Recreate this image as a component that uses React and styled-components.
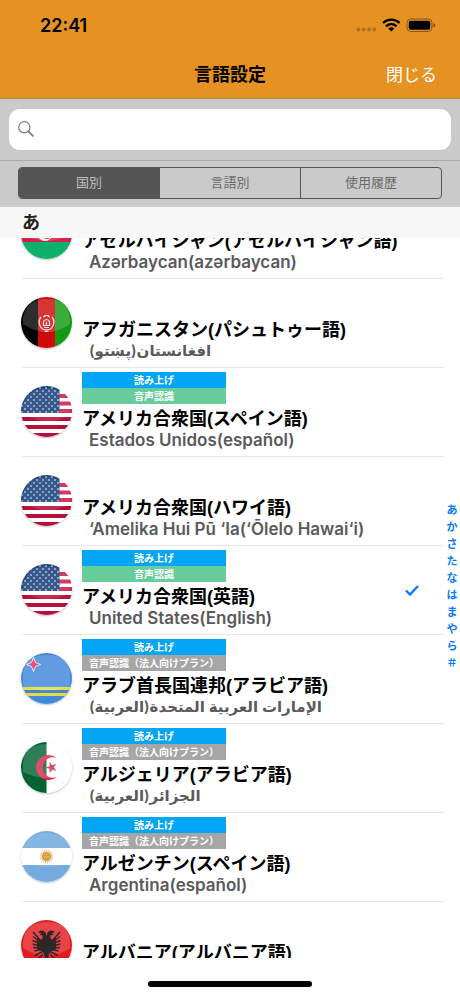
import React, { useLayoutEffect, useRef, useState } from 'react';
import styled, { createGlobalStyle } from 'styled-components';

const GlobalStyle = createGlobalStyle`
  * {
    box-sizing: border-box;
  }
  body {
    margin: 0;
    background: #fff;
    color: #000;
    font-family: Inter, 'Noto Sans CJK JP', 'DejaVu Sans', sans-serif;
  }
  button, input {
    font: inherit;
    color: inherit;
  }
`;

const Screen = styled.div`
  display: flex;
  flex-direction: column;
  height: 100vh;
  overflow: hidden;
`;

const Header = styled.header`
  background: #e69223;
  border-bottom: 1px solid #b08a55;
`;

const StatusBar = styled.div`
  display: flex;
  align-items: center;
  justify-content: space-between;
  height: 50px;
  padding: 0 24px 0 40px;
`;

const Time = styled.span`
  font-size: 18px;
  font-weight: 600;
`;

const StatusIcons = styled.svg`
  width: 80px;
  height: 16px;
`;

const NavBar = styled.div`
  display: grid;
  grid-template-columns: 1fr auto 1fr;
  align-items: center;
  height: 48px;
  padding: 0 23px 2px;
`;

const Title = styled.h1`
  grid-column: 2;
  margin: 0;
  font-size: 18px;
  font-weight: 700;
`;

const CloseButton = styled.button`
  justify-self: end;
  padding: 0;
  border: 0;
  background: none;
  color: #fff;
  font-size: 17px;
  font-weight: 400;
`;

const SearchBar = styled.div`
  padding: 10px 9px;
  background: #cacaca;
  border-bottom: 1px solid #ababab;
`;

const SearchField = styled.label`
  display: flex;
  align-items: center;
  gap: 8px;
  height: 41px;
  padding: 0 9px 2px;
  border-radius: 11px;
  background: #fff;
  svg {
    width: 16px;
    height: 16px;
    flex: none;
  }
`;

const SearchInput = styled.input`
  flex: 1;
  min-width: 0;
  border: 0;
  outline: 0;
  background: none;
  font-size: 16px;
`;

const SegmentBar = styled.div`
  padding: 6px 18px 8px;
  background: #cacaca;
`;

const Segments = styled.div`
  display: flex;
  height: 32px;
  border: 1px solid #555;
  border-radius: 4px;
  overflow: hidden;
`;

const Segment = styled.button`
  flex: 1;
  padding: 0 0 3px;
  border: 0;
  background: ${({ $active }) => ($active ? '#555' : 'transparent')};
  color: ${({ $active }) => ($active ? '#bdbdbd' : '#6a6a6a')};
  font-size: 13px;
  & + & {
    border-left: 1px solid #555;
  }
`;

const SectionHeader = styled.h2`
  height: 31px;
  margin: 0;
  padding: 0 22px;
  background: #f7f7f7;
  color: #222;
  font-size: 18px;
  font-weight: 700;
  line-height: 31px;
`;

const Body = styled.main`
  display: flex;
  flex: 1;
  min-height: 0;
`;

const List = styled.ul`
  flex: 1;
  min-width: 0;
  margin: 0;
  padding: 0;
  overflow-y: auto;
  scrollbar-width: none;
  list-style: none;
`;

const Item = styled.li`
  margin-left: 22px;
  border-bottom: 1px solid #e8e8e8;
`;

const Row = styled.button`
  display: flex;
  align-items: center;
  width: 100%;
  height: 88px;
  padding: 0 24px 0 0;
  border: 0;
  background: none;
  text-align: left;
`;

const FlagIcon = styled.svg`
  flex: none;
  width: 51px;
  height: 51px;
  margin: 0 0 2px -1px;
  border-radius: 50%;
  box-shadow: 0 1px 2px rgba(0, 0, 0, 0.25);
`;

const Info = styled.span`
  flex: 1;
  min-width: 0;
  height: 88px;
  padding: 4px 0 0 10px;
  white-space: nowrap;
`;

const Badges = styled.span`
  display: block;
  width: 144px;
  height: 32px;
`;

const badgeColors = { blue: '#03a5f5', green: '#69cc9b', gray: '#a6a6a6' };

const Badge = styled.span`
  display: block;
  height: 16px;
  background: ${({ $tone }) => badgeColors[$tone]};
  color: #fff;
  font-size: 10px;
  font-weight: 700;
  line-height: 16px;
  text-align: center;
`;

const Name = styled.span`
  display: block;
  height: 26px;
  font-family: 'Liberation Sans', 'Noto Sans CJK JP', sans-serif;
  font-size: 18px;
  font-weight: 700;
  line-height: 30px;
`;

const NativeName = styled.span`
  display: block;
  height: 22px;
  padding-left: 7px;
  color: #5a5a5a;
  font-size: 17px;
  font-weight: 600;
  line-height: 20px;
  text-align: left;
  &:dir(rtl) {
    font-size: 15px;
  }
`;

const CheckMark = styled.svg`
  flex: none;
  width: 16px;
  height: 14px;
`;

const IndexBar = styled.nav`
  display: flex;
  flex-direction: column;
  justify-content: center;
  width: 16px;
  padding-bottom: 24px;
`;

const IndexLink = styled.a`
  height: 17px;
  color: #0a7aff;
  font-family: 'Noto Sans CJK JP', sans-serif;
  font-size: 11px;
  font-weight: 700;
  line-height: 17px;
  text-align: center;
  text-decoration: none;
`;

const HomeArea = styled.footer`
  display: flex;
  justify-content: center;
  height: 38px;
  padding-top: 23px;
`;

const HomeIndicator = styled.span`
  width: 164px;
  height: 6px;
  border-radius: 3px;
  background: #000;
`;

const starPoints = (cx, cy, outer, inner, turn = -90) => {
  const points = [];
  for (let i = 0; i < 10; i += 1) {
    const r = i % 2 ? inner : outer;
    const a = ((turn + i * 36) * Math.PI) / 180;
    points.push(`${cx + r * Math.cos(a)},${cy + r * Math.sin(a)}`);
  }
  return points.join(' ');
};

const unionStars = [];
for (let r = 0; r < 9; r += 1) {
  for (let c = 0; c < 7; c += 1) {
    unionStars.push([(r % 2 ? 4 : 1) + c * 6, 2 + r * 3]);
  }
}

const flags = {
  azerbaijan: (
    <>
      <path fill="#3aa7d8" d="M0 0h51v17H0z" />
      <path fill="#d81e4a" d="M0 17h51v17H0z" />
      <path fill="#0fb06a" d="M0 34h51v17H0z" />
      <circle cx="24" cy="25.5" r="7.500" fill="#fff" />
      <circle cx="26" cy="25" r="6" fill="#d81e4a" />
      <path fill="#fff" opacity=".15" d="M1 0h49v26Q26 40 1 26z" />
    </>
  ),
  afghanistan: (
    <>
      <path fill="#000" d="M0 0h17v51H0z" />
      <path fill="#cf0a0a" d="M17 0h17v51H17z" />
      <path fill="#129a12" d="M34 0h17v51H34z" />
      <g fill="none" stroke="#fff" opacity=".85">
        <path strokeWidth="1.3" d="M20 20c-4 5-1 13 5.500 13s9.500-8 5.500-13" />
        <path strokeWidth="1" d="M22 20q3.500-3 7 0M23 18.500h5" />
        <path strokeWidth="1.200" d="M22.500 28.500h6v-4q-3-4-6 0zM25.500 28v-3M23 30.500h5M23.500 34.500h4" />
      </g>
      <path fill="#fff" opacity=".18" d="M2 22Q4 2 25.500 2T49 22v5Q26 43 2 27z" />
    </>
  ),
  usa: (
    <>
      <path fill="#fff" d="M0 0h51v51H0z" />
      <path stroke="#c9244d" strokeWidth="4" d="M38 10h13M38 17.500h13M38 25h13" />
      <path stroke="#b50f3c" strokeWidth="4" d="M0 33h51M0 41h51M0 49h51" />
      <path fill="#1b427d" d="M0 0h38.500v27H0z" />
      <g fill="#fff">
        {unionStars
          .filter(([x, y]) => x < 38 && y < 27)
          .map(([x, y]) => (
            <circle key={`${x}-${y}`} cx={x} cy={y} r=".8" />
          ))}
      </g>
      <path fill="#fff" opacity=".12" d="M2 20Q6 2 26 2t23 18v9Q26 42 2 28z" />
    </>
  ),
  aruba: (
    <>
      <path fill="#4189dd" d="M0 0h51v51H0z" />
      <path stroke="#e9dc3a" strokeWidth="3" d="M0 35.500h51M0 41.500h51" />
      <path fill="#e5305d" stroke="#fff" strokeWidth=".8" d="M12.500 4.500l2 5 5 2-5 2-2 5-2-5-5-2 5-2z" />
      <path fill="#fff" opacity=".17" d="M2 20Q4 2 26 2t23 18v13Q26 42 2 33z" />
    </>
  ),
  algeria: (
    <>
      <path fill="#fff" d="M0 0h51v51H0z" />
      <path fill="#006233" d="M0 0h25.500v51H0z" />
      <path fill="#dd2449" d="M36 16A12.600 12.600 0 1 0 36 35A10.300 10.300 0 1 1 36 16z" />
      <polygon fill="#dd2449" points={starPoints(30.5, 25.5, 6, 2.3, 180)} />
      <path fill="#fff" opacity=".18" d="M2 20Q4 2 26 2t23 18v10Q26 42 2 30z" />
    </>
  ),
  argentina: (
    <>
      <path fill="#fff" d="M0 0h51v51H0z" />
      <path fill="#74acdf" d="M0 0h51v17H0zM0 34h51v17H0z" />
      <circle cx="25.5" cy="25.5" r="5.600" fill="none" stroke="#dfb878" strokeWidth="2.500" strokeDasharray="1 .8" />
      <circle cx="25.5" cy="25.5" r="4" fill="#eaa321" stroke="#a8672a" strokeWidth=".8" />
      <path stroke="#a8672a" strokeWidth=".6" fill="none" d="M23.500 24.500h1.500M26 24.500h1.500M24 27.500q1.500 1 3 0" />
      <path fill="#fff" opacity=".12" d="M2 20Q4 2 26 2t23 18v10Q26 42 2 30z" />
    </>
  ),
  albania: (
    <>
      <path fill="#e31b1f" d="M0 0h51v51H0z" />
      <path fill="#fff" opacity=".18" d="M2 22Q4 2 26 2t23 20v6Q26 44 2 28z" />
      <g fill="#2e2727">
        <path d="M25.500 16l-1-3.500-2.500-2-3.500.5-1.500 1.500 3 .5-1.500 2 3 .3v3l-3 2.700v9l4 3 1.500 5 1.500 4 1.500-4 1.500-5 4-3v-9l-3-2.700v-3l3-.3-1.500-2 3-.5-1.500-1.500-3.500-.5-2.500 2z" />
        <g fill="none" stroke="#2e2727" strokeWidth="1.400">
          <path d="M20 21l-8-9M20 22.500l-8-6M20 24l-8.500-3.500M19 26l-7.500-2M19 28l-7-.5M20 29.500l-6.500 1.500M21 32l-7 3.500M22 34l-5 5" />
          <path d="M31 21l8-9M31 22.500l8-6M31 24l8.500-3.500M32 26l7.500-2M32 28l7-.5M31 29.500l6.500 1.500M30 32l7 3.500M29 34l5 5" />
        </g>
        <path d="M20 20l-4-3v12l5 2zM31 20l4-3v12l-5 2z" />
      </g>
    </>
  ),
};

const countries = [
  { id: 'az', flag: 'azerbaijan', name: 'アゼルバイジャン(アゼルバイジャン語)', native: 'Azərbaycan(azərbaycan)' },
  { id: 'af', flag: 'afghanistan', name: 'アフガニスタン(パシュトゥー語)', native: 'افغانستان(پښتو)' },
  { id: 'us-es', flag: 'usa', name: 'アメリカ合衆国(スペイン語)', native: 'Estados Unidos(español)', voice: 'free' },
  { id: 'us-haw', flag: 'usa', name: 'アメリカ合衆国(ハワイ語)', native: '‘Amelika Hui Pū ‘Ia(‘Ōlelo Hawai‘i)' },
  { id: 'us-en', flag: 'usa', name: 'アメリカ合衆国(英語)', native: 'United States(English)', voice: 'free' },
  { id: 'ae', flag: 'aruba', name: 'アラブ首長国連邦(アラビア語)', native: 'الإمارات العربية المتحدة(العربية)', voice: 'plan' },
  { id: 'dz', flag: 'algeria', name: 'アルジェリア(アラビア語)', native: 'الجزائر(العربية)', voice: 'plan' },
  { id: 'ar', flag: 'argentina', name: 'アルゼンチン(スペイン語)', native: 'Argentina(español)', voice: 'plan' },
  { id: 'al', flag: 'albania', name: 'アルバニア(アルバニア語)' },
];

const tabs = ['国別', '言語別', '使用履歴'];
const kana = ['あ', 'か', 'さ', 'た', 'な', 'は', 'ま', 'や', 'ら', '＃'];

const CountryRow = ({ country, selected, onSelect }) => (
  <Item>
    <Row type="button" aria-pressed={selected} onClick={onSelect}>
      <FlagIcon viewBox="0 0 51 51" aria-hidden="true">
        {flags[country.flag]}
      </FlagIcon>
      <Info>
        <Badges>
          {country.voice && <Badge $tone="blue">読み上げ</Badge>}
          {country.voice === 'free' && <Badge $tone="green">音声認識</Badge>}
          {country.voice === 'plan' && (
            <Badge $tone="gray">音声認識（法人向けプラン）</Badge>
          )}
        </Badges>
        <Name>{country.name}</Name>
        {country.native && <NativeName dir="auto">{country.native}</NativeName>}
      </Info>
      {selected && (
        <CheckMark viewBox="0 0 16 14" aria-hidden="true">
          <path d="M2 7.500l4 4L14 3" fill="none" stroke="#0a7aff" strokeWidth="2.400" />
        </CheckMark>
      )}
    </Row>
  </Item>
);

const App = () => {
  const [tab, setTab] = useState(tabs[0]);
  const [selected, setSelected] = useState('us-en');
  const listRef = useRef(null);

  // open the list a little way down, under the section header
  useLayoutEffect(() => {
    listRef.current.scrollTop = 48;
  }, []);

  return (
    <Screen>
      <GlobalStyle />
      <Header>
        <StatusBar>
          <Time>22:41</Time>
          <StatusIcons viewBox="0 0 80 16" aria-hidden="true">
            <g fill="#000" opacity=".22">
              <circle cx="2.500" cy="12.500" r="2" />
              <circle cx="7.700" cy="12.500" r="2" />
              <circle cx="13" cy="12.500" r="2" />
              <circle cx="18.300" cy="12.500" r="2" />
            </g>
            <g fill="none" stroke="#000" strokeWidth="2.400">
              <path d="M27 6a12 12 0 0 1 16.600 0" />
              <path d="M30 9.300a7.600 7.600 0 0 1 10.600 0" />
            </g>
            <path d="M32.200 11.600a4.500 4.500 0 0 1 6.200 0l-3.100 3z" />
            <rect x="51" y="2" width="25" height="12.500" rx="3.800" fill="none" stroke="#000" opacity=".4" />
            <rect x="52.700" y="3.700" width="21.600" height="9.100" rx="2.300" />
            <path d="M77.500 6q1.800.7 1.800 2.300t-1.800 2.300z" opacity=".45" />
          </StatusIcons>
        </StatusBar>
        <NavBar>
          <Title>言語設定</Title>
          <CloseButton type="button">閉じる</CloseButton>
        </NavBar>
      </Header>
      <SearchBar>
        <SearchField>
          <svg viewBox="0 0 16 16" fill="none" stroke="#7d7d7d" aria-hidden="true">
            <circle cx="6.300" cy="6.300" r="5.600" strokeWidth="1.200" />
            <path d="M10.400 10.400l5 5" strokeWidth="1.800" />
          </svg>
          <SearchInput type="search" aria-label="検索" />
        </SearchField>
      </SearchBar>
      <SegmentBar>
        <Segments>
          {tabs.map(label => (
            <Segment
              key={label}
              type="button"
              $active={label === tab}
              aria-pressed={label === tab}
              onClick={() => setTab(label)}
            >
              {label}
            </Segment>
          ))}
        </Segments>
      </SegmentBar>
      <SectionHeader>あ</SectionHeader>
      <Body>
        <List ref={listRef}>
          {countries.map(country => (
            <CountryRow
              key={country.id}
              country={country}
              selected={country.id === selected}
              onSelect={() => setSelected(country.id)}
            />
          ))}
        </List>
        <IndexBar aria-label="索引">
          {kana.map(letter => (
            <IndexLink key={letter} href={`#${letter}`}>
              {letter}
            </IndexLink>
          ))}
        </IndexBar>
      </Body>
      <HomeArea>
        <HomeIndicator />
      </HomeArea>
    </Screen>
  );
};

export default App;
